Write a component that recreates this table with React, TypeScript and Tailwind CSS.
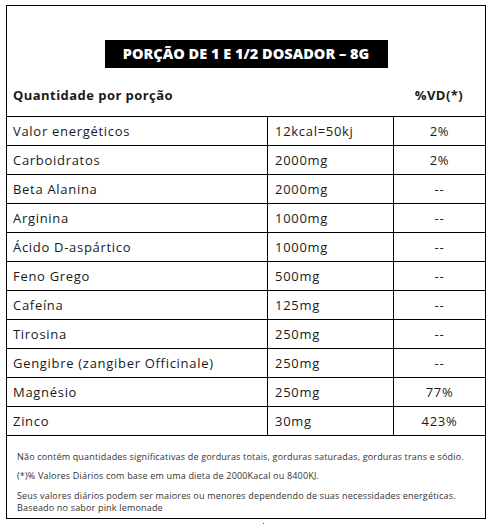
import React from "react";

const rows: [string, string, string][] = [
  ["Valor energéticos", "12kcal=50kj", "2%"],
  ["Carboidratos", "2000mg", "2%"],
  ["Beta Alanina", "2000mg", "--"],
  ["Arginina", "1000mg", "--"],
  ["Ácido D-aspártico", "1000mg", "--"],
  ["Feno Grego", "500mg", "--"],
  ["Cafeína", "125mg", "--"],
  ["Tirosina", "250mg", "--"],
  ["Gengibre (zangiber Officinale)", "250mg", "--"],
  ["Magnésio", "250mg", "77%"],
  ["Zinco", "30mg", "423%"],
];

export default function App() {
  return (
    <div className="bg-white min-h-[529px] pl-[6px] pt-[5px] font-['Open_Sans',sans-serif] text-[#1a1a1a]">
      <div className="w-[480px] border border-black">
        <div className="pt-[34px] flex justify-center">
          <div className="h-[28px] w-[283px] bg-black text-white flex items-center justify-center text-[14.5px] font-extrabold tracking-[0px]">
            PORÇÃO DE 1 E 1/2 DOSADOR – 8G
          </div>
        </div>
        <div className="flex h-[48px] pt-[19px] text-[13px] font-bold leading-[16px] tracking-[0.45px]">
          <div className="w-[260px] pl-[6px]">Quantidade por porção</div>
          <div className="w-[126px]"></div>
          <div className="w-[92px] text-center">%VD(*)</div>
        </div>
        {rows.map(([a, b, c]) => (
          <div key={a} className="flex h-[29px] border-t border-black text-[13px] leading-[28px] tracking-[0.7px]">
            <div className="w-[260px] pl-[6px]">{a}</div>
            <div className="w-[126px] border-l border-black pl-[7px]">{b}</div>
            <div className="w-[92px] border-l border-black text-center">{c}</div>
          </div>
        ))}
        <div className="border-t border-black pt-[15px] pb-[4px] pl-[10px] text-[9px] leading-[12px] text-[#333] tracking-[0.18px]">
          <p>Não contém quantidades significativas de gorduras totais, gorduras saturadas, gorduras trans e sódio.</p>
          <p className="mt-[7px]">(*)% Valores Diários com base em uma dieta de 2000Kacal ou 8400KJ.</p>
          <p className="mt-[8px]">Seus valores diários podem ser maiores ou menores dependendo de suas necessidades energéticas.</p>
          <p>Baseado no sabor pink lemonade</p>
        </div>
      </div>
      <div className="ml-[257px] mt-[4px] w-[1px] h-[1px] bg-[#555]"></div>
    </div>
  );
}
